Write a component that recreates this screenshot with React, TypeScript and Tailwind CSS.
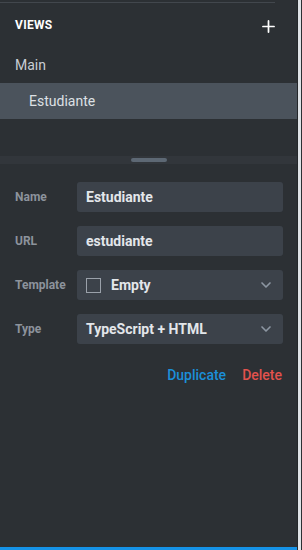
import { Plus, ChevronDown } from "lucide-react";

function Field({ label, children }: { label: string; children: React.ReactNode }) {
  return (
    <div className="flex items-center">
      <div className="w-[62px] text-[12px] font-bold text-[#8c939c]">{label}</div>
      <div className="flex h-[30px] w-[206px] items-center rounded-[3px] bg-[#3c424a] px-[9px] text-[14px] font-bold text-[#e3e6ea]">
        {children}
      </div>
    </div>
  );
}

export default function App() {
  return (
    <div
      className="flex h-[550px] w-[302px] bg-[#2c3034]"
      style={{ fontFamily: "Roboto, 'Liberation Sans', sans-serif" }}
    >
      <div className="flex w-[298px] flex-col border-r border-[#24272a]">
        <div className="mt-[2px] h-px w-[275px] bg-[#42474d]" />

        <div className="flex h-[44px] items-center justify-between pl-[15px] pr-[19px]">
          <span className="text-[12px] font-bold tracking-wide text-white">VIEWS</span>
          <Plus size={19} strokeWidth={2.2} className="mt-[3px] text-white" />
        </div>
        <div className="flex h-[36px] items-center pl-[15px] text-[14px] text-[#c9cdd3]">Main</div>
        <div className="flex h-[36px] items-center bg-[#4b535c] pl-[29px] text-[14px] text-[#dde0e4]">
          Estudiante
        </div>

        <div className="mt-[37px] flex h-[8px] items-center justify-center bg-[#32363b]">
          <div className="h-[4px] w-[36px] rounded-full bg-[#5d6874]" />
        </div>

        <div className="flex flex-col gap-[14px] pl-[15px] pt-[18px]">
          <Field label="Name">Estudiante</Field>
          <Field label="URL">estudiante</Field>
          <Field label="Template">
            <span className="mr-[10px] h-[15px] w-[15px] border-[1.5px] border-[#9aa1aa]" />
            <span className="flex-1">Empty</span>
            <ChevronDown size={16} strokeWidth={2.5} className="text-[#8c96a2]" />
          </Field>
          <Field label="Type">
            <span className="flex-1">TypeScript + HTML</span>
            <ChevronDown size={16} strokeWidth={2.5} className="text-[#8c96a2]" />
          </Field>
        </div>

        <div className="mt-[21px] flex justify-end gap-[16px] pr-[15px] text-[14px] font-medium">
          <span className="text-[#1b8fd9]">Duplicate</span>
          <span className="text-[#e2524d]">Delete</span>
        </div>

        <div className="flex-1" />
        <div className="h-[3px] bg-[#1592e6]" />
      </div>
      <div className="w-[3px] bg-[#dfe3e7]" />
    </div>
  );
}
